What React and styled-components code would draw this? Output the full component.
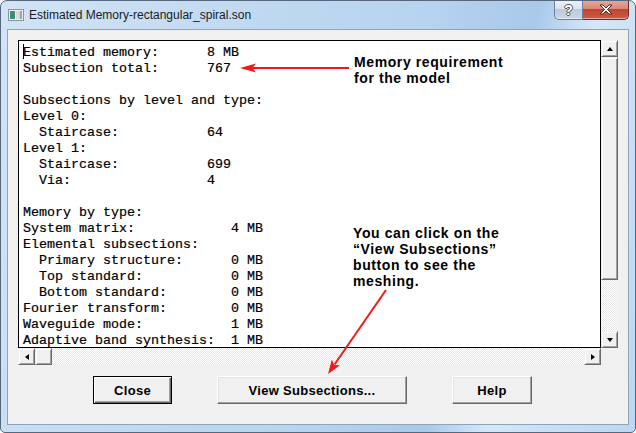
import React from 'react';
import styled, { createGlobalStyle, css } from 'styled-components';

const Global = createGlobalStyle`
  html, body { margin: 0; padding: 0; background: #fff; }
  body { width: 636px; height: 433px; overflow: hidden; }
`;

const Window = styled.div`
  position: relative;
  box-sizing: border-box;
  width: 636px;
  height: 433px;
  padding: 0 6px 7px 6px;
  display: flex;
  flex-direction: column;
  border: 1px solid #56687d;
  border-radius: 7px 7px 5px 5px;
  background: linear-gradient(105deg, #d2e4f6 0%, #c2daf2 30%, #b6d3ef 58%, #a9c9e9 72%, #d6e8f8 80%, #c9dff4 88%, #bdd7f0 100%);
  overflow: hidden;
`;

const TitleBar = styled.div`
  height: 28px;
  display: flex;
  align-items: center;
  padding-left: 1px;
`;

const Title = styled.span`
  margin-left: 5px;
  font: 12px "Liberation Sans", Arial, sans-serif;
  color: #1b1b1b;
  flex: 1;
`;

const CaptionGroup = styled.div`
  align-self: flex-start;
  margin-top: -1px;
  display: flex;
`;

const CaptionBtn = styled.div`
  box-sizing: border-box;
  width: ${p => p.$w}px;
  height: 20px;
  display: flex;
  align-items: center;
  justify-content: center;
  border: 1px solid ${p => (p.$red ? '#6b2a22' : '#6d7f94')};
  border-top: none;
  ${p => p.$red
    ? css`
      border-left: none;
      border-radius: 0 0 5px 0;
      background: linear-gradient(#e8a899 0%, #d88a78 45%, #c2452f 50%, #cb5c45 100%);
    `
    : css`
      border-radius: 0 0 0 5px;
      background: linear-gradient(#eef3f8 0%, #dbe4ee 45%, #bccadb 50%, #cad7e5 100%);
    `}
  box-shadow: inset 0 -1px rgba(255, 255, 255, 0.5);
`;

const HelpGlyph = styled.span`
  font: bold 14px "Liberation Sans", Arial, sans-serif;
  color: #fff;
  text-shadow: -1px 0 #4a5563, 1px 0 #4a5563, 0 -1px #4a5563, 0 1px #4a5563;
  line-height: 1;
`;

const Client = styled.div`
  flex: 1;
  display: flex;
  flex-direction: column;
  border: 1px solid #8ea4bb;
  background: #f0f0f0;
  padding: 10px 10px 0 10px;
`;

const Panel = styled.div`
  display: grid;
  grid-template-columns: 583px 17px;
  grid-template-rows: 308px 17px;
`;

const TextBox = styled.div`
  box-sizing: border-box;
  border: 1px solid #000;
  background: #fff;
  padding: 3px 4px;
  overflow: hidden;
  white-space: pre;
  font: 13.33px "Liberation Mono", "Courier New", monospace;
  line-height: 16px;
  color: #000;
  -webkit-text-stroke: 0.2px #000;
`;

const Caret = styled.span`
  display: inline-block;
  width: 1px;
  height: 15px;
  margin-right: -1px;
  vertical-align: -3px;
  background: #000;
`;

const VScroll = styled.div`
  display: flex;
  flex-direction: column;
`;

const HScroll = styled.div`
  display: flex;
`;

const Track = styled.div`
  flex: 1;
  background: repeating-conic-gradient(#e6e6e6 0 25%, #fff 0 50%) 0 0 / 2px 2px;
`;

const Corner = styled.div`
  background: #f0f0f0;
`;

const Bevel = styled.div`
  box-sizing: border-box;
  flex: none;
  width: ${p => p.$w || 17}px;
  height: ${p => p.$h || 17}px;
  background: #f0f0f0;
  border: 1px solid;
  border-color: #f0f0f0 #696969 #696969 #f0f0f0;
  box-shadow: inset 1px 1px #fff, inset -1px -1px #a0a0a0;
  display: flex;
  align-items: center;
  justify-content: center;
`;

const tri = {
  up: css`border-width: 0 3.5px 4px; border-color: transparent transparent #000;`,
  down: css`border-width: 4px 3.5px 0; border-color: #000 transparent transparent;`,
  left: css`border-width: 3.5px 4px 3.5px 0; border-color: transparent #000 transparent transparent;`,
  right: css`border-width: 3.5px 0 3.5px 4px; border-color: transparent transparent transparent #000;`,
};

const Arrow = styled.span`
  width: 0;
  height: 0;
  border-style: solid;
  ${p => tri[p.$dir]}
`;

const ButtonRow = styled.div`
  display: flex;
  gap: 45px;
  margin-top: 11px;
  padding-left: 75px;
`;

const Button = styled.button`
  box-sizing: border-box;
  width: ${p => p.$w}px;
  height: 28px;
  padding: 0;
  background: #f0f0f0;
  border: 1px solid;
  border-color: #fff #696969 #696969 #fff;
  box-shadow: inset -1px -1px #a0a0a0, inset 1px 1px #e3e3e3;
  font: bold 13px "Liberation Sans", Arial, sans-serif;
  letter-spacing: 0.3px;
  color: #000;
  ${p => p.$default && css`
    border-color: #000;
    box-shadow: inset 1px 1px #fff, inset -1px -1px #696969, inset -2px -2px #a0a0a0;
  `}
`;

const Note = styled.div`
  position: absolute;
  left: ${p => p.$x}px;
  top: ${p => p.$y}px;
  font: bold 14px "Liberation Sans", Arial, sans-serif;
  letter-spacing: 0.6px;
  line-height: 16px;
  color: #000;
  white-space: pre;
`;

const Overlay = styled.svg`
  position: absolute;
  left: -1px;
  top: -1px;
  pointer-events: none;
`;

const WinIcon = () => (
  <svg width="16" height="16" viewBox="0 0 16 16">
    <rect x="0.5" y="2.5" width="15" height="11" fill="#eef0f2" stroke="#8a9299" />
    <rect x="2" y="4" width="5" height="8" fill="#3e8c7c" />
    <rect x="8" y="4" width="6" height="8" fill="#d6dadd" />
    <rect x="12" y="4" width="2" height="8" fill="#9aa3aa" />
  </svg>
);

const CloseGlyph = () => (
  <svg width="14" height="11" viewBox="0 0 14 11">
    <path d="M1 1h3l3 3 3-3h3l-4.5 4.5L13 10h-3L7 7l-3 3H1l4.5-4.5z" fill="#fff" stroke="#4a2a26" strokeWidth="1" strokeLinejoin="round" />
  </svg>
);

const rows = [
  ['Estimated memory:', '8 MB', 23],
  ['Subsection total:', '767', 23],
  [''],
  ['Subsections by level and type:'],
  ['Level 0:'],
  ['  Staircase:', '64', 23],
  ['Level 1:'],
  ['  Staircase:', '699', 23],
  ['  Via:', '4', 23],
  [''],
  ['Memory by type:'],
  ['System matrix:', '4 MB', 26],
  ['Elemental subsections:'],
  ['  Primary structure:', '0 MB', 26],
  ['  Top standard:', '0 MB', 26],
  ['  Bottom standard:', '0 MB', 26],
  ['Fourier transform:', '0 MB', 26],
  ['Waveguide mode:', '1 MB', 26],
  ['Adaptive band synthesis:', '1 MB', 26],
];

const report = rows
  .map(([label, value, col]) => (value ? label.padEnd(col, ' ') + value : label))
  .join('\n');

export default function App() {
  return (
    <>
      <Global />
      <Window>
        <TitleBar>
          <WinIcon />
          <Title>Estimated Memory-rectangular_spiral.son</Title>
          <CaptionGroup>
            <CaptionBtn $w={29}><HelpGlyph>?</HelpGlyph></CaptionBtn>
            <CaptionBtn $w={46} $red><CloseGlyph /></CaptionBtn>
          </CaptionGroup>
        </TitleBar>
        <Client>
          <Panel>
            <TextBox><Caret />{report}</TextBox>
            <VScroll>
              <Bevel><Arrow $dir="up" /></Bevel>
              <Bevel $h={223} />
              <Track />
              <Bevel><Arrow $dir="down" /></Bevel>
            </VScroll>
            <HScroll>
              <Bevel><Arrow $dir="left" /></Bevel>
              <Bevel />
              <Track />
              <Bevel><Arrow $dir="right" /></Bevel>
            </HScroll>
            <Corner />
          </Panel>
          <ButtonRow>
            <Button $w={79} $default>Close</Button>
            <Button $w={190}>View Subsections...</Button>
            <Button $w={80}>Help</Button>
          </ButtonRow>
        </Client>
        <Note $x={353} $y={53}>{'Memory requirement\nfor the model'}</Note>
        <Note $x={352} $y={224}>{'You can click on the\n\u201CView Subsections\u201D\nbutton to see the\nmeshing.'}</Note>
        <Overlay width="636" height="433" viewBox="0 0 636 433">
          <line x1="349" y1="68" x2="252" y2="68" stroke="#f41818" strokeWidth="2" />
          <polygon points="240,68 256,63.5 252.5,68 256,72.5" fill="#f41818" />
          <line x1="386" y1="290" x2="334.5" y2="364.5" stroke="#f41818" strokeWidth="2" />
          <polygon points="328,374 331.8,359.6 334.2,364.9 340,365.2" fill="#f41818" />
        </Overlay>
      </Window>
    </>
  );
}
